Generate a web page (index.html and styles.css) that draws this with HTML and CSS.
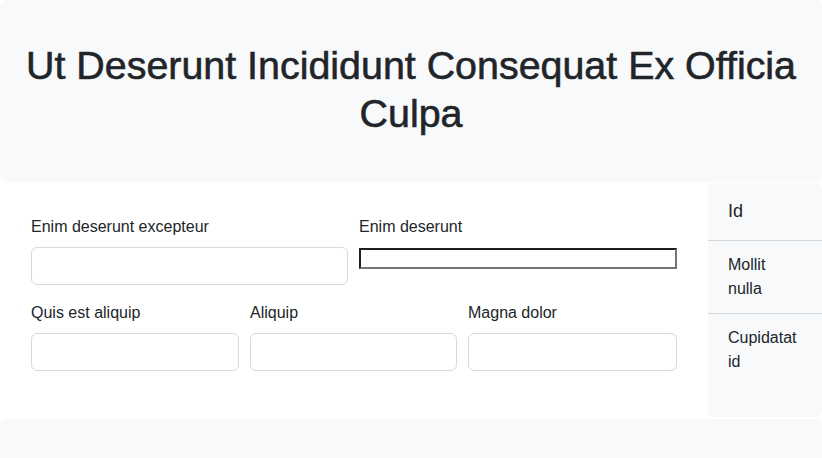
FILE: index.html
```html
<!DOCTYPE html>
<html lang="en">
<head>
<meta charset="utf-8">
<title>Form</title>
<link rel="stylesheet" href="styles.css">
</head>
<body>
<header class="hero">
  <h1 class="hero-title">Ut Deserunt Incididunt Consequat Ex Officia Culpa</h1>
</header>
<div class="layout">
  <main class="main">
    <form class="form">
      <div class="row row-2">
        <div class="field">
          <label class="form-label" for="f1">Enim deserunt excepteur</label>
          <input class="form-control" id="f1" type="text">
        </div>
        <div class="field">
          <label class="form-label" for="f2">Enim deserunt</label>
          <input class="raw-input" id="f2" type="text">
        </div>
      </div>
      <div class="row row-3">
        <div class="field">
          <label class="form-label" for="f3">Quis est aliquip</label>
          <input class="form-control" id="f3" type="text">
        </div>
        <div class="field">
          <label class="form-label" for="f4">Aliquip</label>
          <input class="form-control" id="f4" type="text">
        </div>
        <div class="field">
          <label class="form-label" for="f5">Magna dolor</label>
          <input class="form-control" id="f5" type="text">
        </div>
      </div>
    </form>
  </main>
  <aside class="sidebar">
    <ul class="side-list">
      <li class="side-item side-head">Id</li>
      <li class="side-item">Mollit nulla</li>
      <li class="side-item">Cupidatat id</li>
    </ul>
  </aside>
</div>
<footer class="footer"></footer>
</body>
</html>
```

FILE: styles.css
```css
* { box-sizing: border-box; }

html, body {
  margin: 0;
  padding: 0;
  background: #ffffff;
  color: #212529;
  font-family: "Liberation Sans", Arial, sans-serif;
  font-size: 16px;
  line-height: 1.5;
}

.hero {
  background: #f8f9fa;
  border-radius: 6px;
  padding: 41px 16px 45px;
  text-align: center;
}

.hero-title {
  margin: 0;
  font-size: 39.4px;
  font-weight: 500;
  line-height: 48px;
  -webkit-text-stroke: 0.6px #212529;
}

.layout {
  display: flex;
  margin-top: 1px;
}

.main {
  flex: 1 1 auto;
  background: #ffffff;
  padding: 32px 31px 30px;
}

.row {
  display: grid;
  gap: 11px;
  margin-bottom: 16px;
}

.row-2 { grid-template-columns: 317px 1fr; }
.row-3 { grid-template-columns: 208px 207px 1fr; }

.field {
  display: flex;
  flex-direction: column;
  align-items: stretch;
}

.form-label {
  display: block;
  margin-bottom: 8px;
  line-height: 24px;
}

.form-control {
  display: block;
  width: 100%;
  height: 38px;
  padding: 6px 12px;
  font: inherit;
  border: 1px solid #d6d9dd;
  border-radius: 6px;
  background: #fff;
  appearance: none;
}

.raw-input {
  display: block;
  width: 100%;
  height: 21px;
  margin-top: 1px;
  padding: 1px 2px;
  font-family: "Liberation Sans", Arial, sans-serif;
  font-size: 13px;
  border-width: 2px;
  border-style: solid;
  border-color: #1e1e1e #767676 #767676 #1e1e1e;
  border-radius: 0;
  background: #fff;
  appearance: none;
}

.sidebar {
  flex: 0 0 114px;
  background: #f8f9fa;
  border-radius: 6px;
}

.side-list {
  list-style: none;
  margin: 0;
  padding: 0;
}

.side-item {
  padding: 12px 22px 12px 20px;
  line-height: 24px;
  border-top: 1px solid #d3d6da;
}

.side-item.side-head {
  border-top: none;
  font-size: 18px;
  line-height: 27px;
  padding-top: 15px;
  padding-bottom: 15px;
}

.footer {
  background: #f8f9fa;
  border-radius: 6px;
  margin-top: 2px;
  height: 60px;
}
```
